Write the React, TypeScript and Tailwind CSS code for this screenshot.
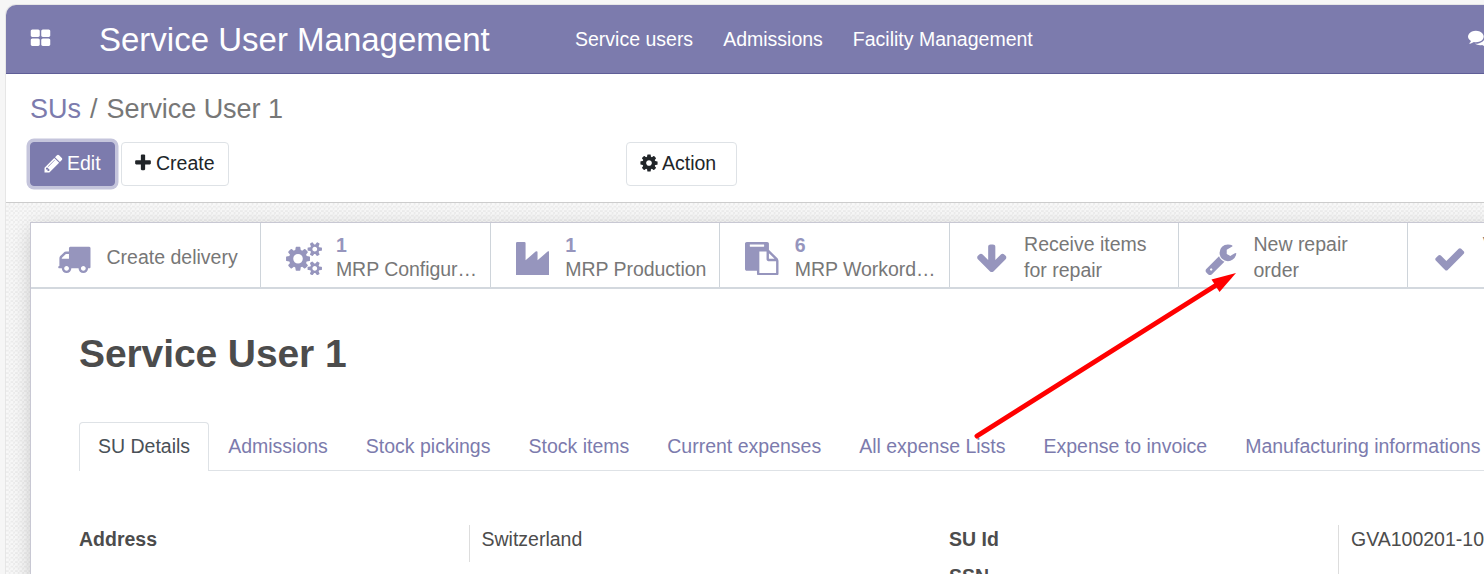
import type { ReactNode } from "react";

const paths = {
  grid: "M832 1024v384q0 52-38 90t-90 38h-512q-52 0-90-38t-38-90v-384q0-52 38-90t90-38h512q52 0 90 38t38 90zm0-768v384q0 52-38 90t-90 38h-512q-52 0-90-38t-38-90v-384q0-52 38-90t90-38h512q52 0 90 38t38 90zm896 768v384q0 52-38 90t-90 38h-512q-52 0-90-38t-38-90v-384q0-52 38-90t90-38h512q52 0 90 38t38 90zm0-768v384q0 52-38 90t-90 38h-512q-52 0-90-38t-38-90v-384q0-52 38-90t90-38h512q52 0 90 38t38 90z",
  pencil: "M491 1536l91-91-235-235-91 91v107h128v128h107zm523-928q0-22-22-22-10 0-17 7l-542 542q-7 7-7 17 0 22 22 22 10 0 17-7l542-542q7-7 7-17zm-54-192l416 416-832 832h-416v-416zm683 96q0 53-37 90l-166 166-416-416 166-165q36-38 90-38 53 0 91 38l235 234q37 39 37 91z",
  plus: "M1600 736v192q0 40-28 68t-68 28h-416v416q0 40-28 68t-68 28h-192q-40 0-68-28t-28-68v-416h-416q-40 0-68-28t-28-68v-192q0-40 28-68t68-28h416v-416q0-40 28-68t68-28h192q40 0 68 28t28 68v416h416q40 0 68 28t28 68z",
  cog: "M1152 896q0-106-75-181t-181-75-181 75-75 181 75 181 181 75 181-75 75-181zm512-109v222q0 12-8 23t-20 13l-185 28q-19 54-39 91 35 50 107 138 10 12 10 25t-9 23q-27 37-99 108t-94 71q-12 0-26-9l-138-108q-44 23-91 38-16 136-29 186-7 28-36 28h-222q-14 0-24.500-8.500t-11.500-21.500l-28-184q-49-16-90-37l-141 107q-10 9-25 9-14 0-25-11-126-114-165-168-7-10-7-23 0-12 8-23 15-21 51-66.500t54-70.500q-27-50-41-99l-183-27q-13-2-21-12.500t-8-23.500v-222q0-12 8-23t19-13l186-28q14-46 39-92-40-57-107-138-10-12-10-24 0-10 9-23 26-36 98.500-107.500t94.500-71.500q13 0 26 10l138 107q44-23 91-38 16-136 29-186 7-28 36-28h222q14 0 24.500 8.500t11.500 21.500l28 184q49 16 90 37l142-107q9-9 24-9 13 0 25 10 129 119 165 170 7 8 7 22 0 12-8 23-15 21-51 66.500t-54 70.500q26 50 41 98l183 28q13 2 21 12.500t8 23.500z",
  truck: "M640 1408q0-52-38-90t-90-38-90 38-38 90 38 90 90 38 90-38 38-90zm-384-512h384v-256h-158q-13 0-22 9l-195 195q-9 9-9 22v30zm1280 512q0-52-38-90t-90-38-90 38-38 90 38 90 90 38 90-38 38-90zm256-1088v1024q0 15-4 26.500t-13.500 18.500-16.500 11.500-23.500 6-22.500 2-25.500 0-22.500-.5q0 106-75 181t-181 75-181-75-75-181h-384q0 106-75 181t-181 75-181-75-75-181h-64q-3 0-22.500.5t-25.500 0-22.500-2-23.500-6-16.500-11.500-13.500-18.500-4-26.500q0-26 19-45t45-19v-320q0-8-.5-35t0-38 2.500-34.500 6.500-37 14-30.500 22.500-30l198-198q19-19 50.500-32t58.500-13h160v-192q0-26 19-45t45-19h1024q26 0 45 19t19 45z",
  cogs: "M832 896q0-106-75-181t-181-75-181 75-75 181 75 181 181 75 181-75 75-181zm768 512q0-52-38-90t-90-38-90 38-38 90q0 53 37.500 90.500t90.500 37.500 90.500-37.500 37.500-90.500zm0-1024q0-52-38-90t-90-38-90 38-38 90q0 53 37.500 90.500t90.500 37.500 90.500-37.500 37.500-90.500zm-384 421v185q0 10-7 19.500t-16 10.500l-155 24q-11 35-32 76 34 48 90 115 7 11 7 20 0 12-7 19-23 30-82.500 89.500t-78.500 59.500q-11 0-21-7l-115-90q-37 19-77 31-11 108-23 155-7 24-30 24h-186q-11 0-20-7.500t-10-17.500l-23-153q-34-10-75-31l-118 89q-7 7-20 7-11 0-21-8-144-133-144-160 0-9 7-19 10-14 41-53t47-61q-23-44-35-82l-152-24q-10-1-17-9.500t-7-19.500v-185q0-10 7-19.500t16-10.500l155-24q11-35 32-76-34-48-90-115-7-11-7-20 0-12 7-20 22-30 82-89t79-59q11 0 21 7l115 90q34-18 77-32 11-108 23-154 7-24 30-24h186q11 0 20 7.500t10 17.500l23 153q34 10 75 31l118-89q8-7 20-7 11 0 21 8 144 133 144 160 0 8-7 19-12 16-42 54t-45 60q23 48 34 82l152 23q10 2 17 10.500t7 19.500zm640 533v140q0 16-149 31-12 27-30 52 51 113 51 138 0 4-4 7-122 71-124 71-8 0-46-47t-52-68q-20 2-30 2t-30-2q-14 21-52 68t-46 47q-2 0-124-71-4-3-4-7 0-25 51-138-18-25-30-52-149-15-149-31v-140q0-16 149-31 13-29 30-52-51-113-51-138 0-4 4-7 4-2 35-20t59-34 30-16q8 0 46 46.500t52 67.500q20-2 30-2t30 2q51-71 92-112l6-2q4 0 124 70 4 3 4 7 0 25-51 138 17 23 30 52 149 15 149 31zm0-1024v140q0 16-149 31-12 27-30 52 51 113 51 138 0 4-4 7-122 71-124 71-8 0-46-47t-52-68q-20 2-30 2t-30-2q-14 21-52 68t-46 47q-2 0-124-71-4-3-4-7 0-25 51-138-18-25-30-52-149-15-149-31v-140q0-16 149-31 13-29 30-52-51-113-51-138 0-4 4-7 4-2 35-20t59-34 30-16q8 0 46 46.500t52 67.500q20-2 30-2t30 2q51-71 92-112l6-2q4 0 124 70 4 3 4 7 0 25-51 138 17 23 30 52 149 15 149 31z",
  industry: "M64 0h384q26 0 45 19t19 45v915l537-465q103-70 103 50v415l537-465q103-70 103 50v1164q0 64-64 64h-1664q-64 0-64-64v-1664q0-64 64-64z",
  paste: "M768 1664h896v-640h-416q-40 0-68-28t-28-68v-416h-384v1152zm256-1440v-64q0-13-9.500-22.500t-22.500-9.500h-704q-13 0-22.500 9.500t-9.500 22.500v64q0 13 9.500 22.500t22.500 9.500h704q13 0 22.500-9.500t9.500-22.500zm256 672h299l-299-299v299zm512 128v672q0 40-28 68t-68 28h-960q-40 0-68-28t-28-68v-160h-544q-40 0-68-28t-28-68v-1344q0-40 28-68t68-28h1088q40 0 68 28t28 68v328q21 13 36 28l408 408q28 28 48 76t20 88z",
  arrowDown: "M1675 832q0 53-37 90l-651 652q-39 37-91 37-53 0-90-37l-651-652q-38-36-38-90 0-53 38-91l74-75q39-37 91-37 53 0 90 37l294 294v-704q0-52 38-90t90-38h128q52 0 90 38t38 90v704l294-294q37-37 90-37 52 0 91 37l75 75q37 39 37 91z",
  wrench: "M448 1472q0-26-19-45t-45-19-45 19-19 45 19 45 45 19 45-19 19-45zm644-420l-682 682q-37 37-90 37-52 0-91-37l-106-108q-38-36-38-90 0-53 38-91l681-681q39 98 114.500 173.500t173.500 114.500zm634-435q0 39-23 106-47 134-164.500 217.500t-258.500 83.500q-185 0-316.500-131.500t-131.500-316.500 131.500-316.500 316.500-131.500q58 0 121.500 16.500t107.500 46.500q16 11 16 28t-16 28l-293 169v224l193 107q5-3 79-48.500t135.500-81 70.500-35.500q15 0 23.500 10t8.500 25z",
  check: "M1671 566q0 40-28 68l-724 724-136 136q-28 28-68 28t-68-28l-136-136-362-362q-28-28-28-68t28-68l136-136q28-28 68-28t68 28l294 295 656-657q28-28 68-28t68 28l136 136q28 28 28 68z",
  comments: "M1408 768q0 139-94 257t-256.500 186.500-353.500 68.500q-86 0-176-16-124 88-278 128-36 9-86 16h-3q-11 0-20.500-8t-11.500-21q-1-3-1-6.500t.5-6.500 2-6l2.500-5 3.500-5.500 4-5 4.500-5 4-4.500q5-6 23-25t26-29.500 22.500-29 25-38.500 20.500-44q-124-72-195-177t-71-224q0-139 94-257t256.500-186.500 353.500-68.500 353.500 68.500 256.500 186.500 94 257zm384 256q0 120-71 224.500t-195 176.500q10 24 20.500 44t25 38.500 22.500 29 26 29.500 23 25q1 1 4 4.500t4.500 5 4 5 3.500 5.500l2.500 5 2 6 .5 6.500-1 6.500q-3 14-13 22t-22 7q-50-7-86-16-154-40-278-128-90 16-176 16-271 0-472-132 58 4 88 4 161 0 309-45t264-129q125-92 192-212t67-254q0-77-23-152 129 71 204 178t75 230z",
};

type IconName = keyof typeof paths;

function Icon({ name, className }: { name: IconName; className: string }) {
  return (
    <svg
      viewBox={name === "cogs" ? "-64 0 1920 1792" : "0 0 1792 1792"}
      className={`shrink-0 fill-current ${className}`}
      aria-hidden="true"
    >
      <path d={paths[name]} />
    </svg>
  );
}

function Navbar() {
  return (
    <header className="flex h-[69px] shrink-0 items-center border-b border-[#5f5e97] bg-[#7c7bad] text-white">
      <Icon name="grid" className="mb-[2px] ml-6 size-[21px]" />
      <h1 className="ml-12 w-[476px] pt-px text-[33px]">Service User Management</h1>
      <nav className="flex gap-[30px] pt-[2px] text-[19.5px]">
        <a>Service users</a>
        <a>Admissions</a>
        <a>Facility Management</a>
      </nav>
      <Icon name="comments" className="-mr-1 mb-[3px] ml-auto size-[20px]" />
    </header>
  );
}

const buttonBase = "flex h-11 items-center rounded-[4px] border pb-px";

function ControlPanel() {
  return (
    <section className="h-[129px] shrink-0 border-b border-[#ccc] bg-white pl-6 pt-[15px]">
      <div className="flex h-10 items-center text-[27px] text-[#777]">
        <a className="text-[#7c7bad]">SUs</a>
        <span className="mx-[9px]">/</span>
        <span className="tracking-[-0.05px]">Service User 1</span>
      </div>
      <div className="mt-[13px] flex text-[19.5px] text-[#212529]">
        <button className={`${buttonBase} w-[85px] border-[#7c7bad] bg-[#7c7bad] pl-[12px] text-white ring-[3.5px] ring-[#c5c5dc]`}>
          <Icon name="pencil" className="mr-[3px] size-[21px]" />
          Edit
        </button>
        <button className={`${buttonBase} ml-[6px] w-[108px] border-[#dee2e6] bg-white pl-[11px]`}>
          <Icon name="plus" className="mb-[2px] mr-[3px] size-[20px]" />
          Create
        </button>
        <button className={`${buttonBase} ml-[397px] w-[111px] border-[#dee2e6] bg-white pl-[12px]`}>
          <Icon name="cog" className="mb-[2px] mr-[3px] size-[20px]" />
          Action
        </button>
      </div>
    </section>
  );
}

function Stat({ icon, children }: { icon: IconName; children: ReactNode }) {
  return (
    <div className="flex w-[229.4px] shrink-0 items-center border-r border-[#ced4da] pl-[25px]">
      <div className="flex w-[49.500px] shrink-0 pt-[7px] text-[#9695bd]">
        <Icon name={icon} className={icon === "cogs" ? "h-[33.500px] w-[36px]" : "size-[33.500px]"} />
      </div>
      <div className="min-w-0 flex-1 pr-2.5 pt-[3px] leading-[26px]">{children}</div>
    </div>
  );
}

function Counter({ value, label }: { value: string; label: string }) {
  return (
    <div className="leading-6">
      <div className="font-bold text-[#9695bd]">{value}</div>
      <div className="truncate tracking-[-0.04px]">{label}</div>
    </div>
  );
}

function StatBar() {
  return (
    <div className="flex h-[66px] overflow-hidden border-b-2 border-[#d3d8de] pl-px text-[19.5px] text-[#777]">
      <Stat icon="truck">Create delivery</Stat>
      <Stat icon="cogs"><Counter value="1" label="MRP Configurations" /></Stat>
      <Stat icon="industry"><Counter value="1" label="MRP Production" /></Stat>
      <Stat icon="paste"><Counter value="6" label="MRP Workorders" /></Stat>
      <Stat icon="arrowDown">Receive items<br />for repair</Stat>
      <Stat icon="wrench">New repair<br />order</Stat>
      <Stat icon="check">Validate<br /><br /></Stat>
    </div>
  );
}

const tabs = [
  "Admissions",
  "Stock pickings",
  "Stock items",
  "Current expenses",
  "All expense Lists",
  "Expense to invoice",
  "Manufacturing informations",
];

function Tabs() {
  return (
    <div className="mt-[44px] flex h-[49px] border-b border-[#dee2e6] text-[19.5px] leading-[47px]">
      <a className="-mb-px h-[49px] shrink-0 rounded-t-[4px] border border-b-0 border-[#dee2e6] bg-white px-[18px] text-[#495057]">
        SU Details
      </a>
      {tabs.map((tab) => (
        <a key={tab} className="shrink-0 border border-transparent px-[18px] text-[#7c7bad]">
          {tab}
        </a>
      ))}
    </div>
  );
}

function Details() {
  return (
    <div className="mt-[54px] flex text-[19.5px] leading-[29px] text-[#4c4c4c]">
      <div className="flex w-[870px] shrink-0 items-start">
        <div className="w-[390px] font-bold">Address</div>
        <div className="h-[37px] border-l border-[#ddd] pl-[11.500px]">Switzerland</div>
      </div>
      <div className="w-[389px] shrink-0 font-bold">
        <div>SU Id</div>
        <div className="mt-[8px]">SSN</div>
      </div>
      <div className="h-20 border-l border-[#ddd] pl-3">GVA100201-1001</div>
    </div>
  );
}

function PointerArrow() {
  return (
    <svg className="pointer-events-none absolute left-0 top-0" width="1484" height="574" aria-hidden="true">
      <path d="M977 436L1218 284" stroke="#f00" strokeWidth="5" strokeLinecap="round" />
      <path d="M1236 273L1211.500 279.500L1219.500 292Z" fill="#f00" />
    </svg>
  );
}

export default function App() {
  return (
    <div className="relative h-[574px] w-[1484px] overflow-hidden bg-[#f6f6f6] pl-1.5 pt-[5px] font-['Liberation_Sans',Arial,sans-serif]">
      <div className="flex h-[569px] flex-col overflow-hidden rounded-tl-[10px] shadow-[0_0_0_1px_#e6e6e6]">
        <Navbar />
        <ControlPanel />
        <main className="flex-1 bg-[conic-gradient(#ececec_25%,#f8f8f8_0_50%,#ececec_0_75%,#f8f8f8_0)] bg-[length:4.500px_4.500px] pl-6 pt-[19px]">
          <div className="h-[600px] w-[1700px] border border-[#c8c8d3] bg-white shadow-[0_4px_20px_-3px_rgba(0,0,0,0.22)]">
            <StatBar />
            <div className="pl-12 pt-[40px]">
              <h2 className="h-[49px] text-[39px] font-bold leading-[49px] tracking-[-0.1px] text-[#4c4c4c]">Service User 1</h2>
              <Tabs />
              <Details />
            </div>
          </div>
        </main>
      </div>
      <PointerArrow />
    </div>
  );
}
